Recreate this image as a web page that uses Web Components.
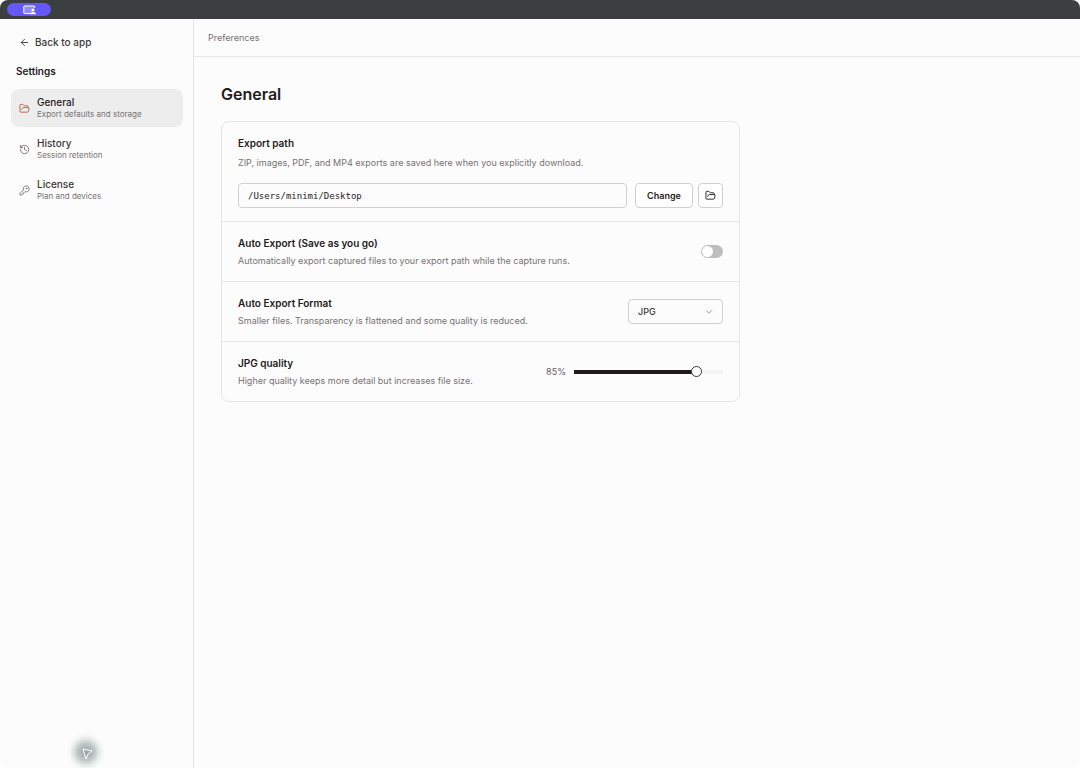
<!DOCTYPE html>
<html lang="en">
<head>
<meta charset="utf-8">
<title>Preferences</title>
<style>
html,body{height:100%}
body{margin:0;background:#fff;font-family:Inter,"Liberation Sans",sans-serif;font-size:10px;line-height:12px;color:#1f1b1d}
</style>
</head>
<body>
<settings-app></settings-app>
<script>
const icons = {
  folder: '<path d="m6 14 1.5-2.9A2 2 0 0 1 9.24 10H20a2 2 0 0 1 1.94 2.5l-1.54 6a2 2 0 0 1-1.95 1.5H4a2 2 0 0 1-2-2V5a2 2 0 0 1 2-2h3.9a2 2 0 0 1 1.69.9l.81 1.2a2 2 0 0 0 1.67.9H18a2 2 0 0 1 2 2v2"/>',
  history: '<path d="M3 12a9 9 0 1 0 9-9 9.75 9.75 0 0 0-6.74 2.74L3 8"/><path d="M3 3v5h5M12 7v5l4 2"/>',
  key: '<path d="M2.6 17.4A2 2 0 0 0 2 18.8V21a1 1 0 0 0 1 1h3a1 1 0 0 0 1-1v-1a1 1 0 0 1 1-1h1a1 1 0 0 0 1-1v-1a1 1 0 0 1 1-1h.2a2 2 0 0 0 1.4-.6l.8-.8a6.5 6.5 0 1 0-4-4z"/><circle cx="16.5" cy="7.5" r=".8" fill="currentColor"/>',
  back: '<path d="m12 19-7-7 7-7M19 12H5"/>',
  chevron: '<path d="m6 9 6 6 6-6"/>'
};

function define(name, html, setup) {
  const template = document.createElement('template');
  template.innerHTML = '<style>*{box-sizing:border-box}:host{display:block;box-sizing:border-box}</style>' + html;
  customElements.define(name, class extends HTMLElement {
    connectedCallback() {
      if (this.shadowRoot) return;
      this.attachShadow({ mode: 'open' }).append(template.content.cloneNode(true));
      if (setup) setup(this, this.shadowRoot);
    }
  });
}

define('ui-icon', `
<style>:host{flex:none;width:11px;height:11px}svg{display:block;width:100%;height:100%}</style>
<svg viewBox="0 0 24 24" fill="none" stroke="currentColor" stroke-width="2" stroke-linecap="round" stroke-linejoin="round" aria-hidden="true"></svg>`,
(host, root) => { root.querySelector('svg').innerHTML = icons[host.getAttribute('name')] || ''; });

define('title-bar', `
<style>
:host{flex:none;height:19px;padding:3px 7px;background:#3b3f3f;border-radius:8px 8px 0 0}
button{display:flex;align-items:center;justify-content:center;width:44px;height:13px;padding:0;border:0;border-radius:7px;background:#6657fb;color:#fff}
svg{width:13px;height:10px}
</style>
<button type="button" aria-label="Presenter view"><svg viewBox="0 0 13 10" aria-hidden="true">
<path d="M7 8.5H1.5a.7.7 0 0 1-.7-.7V1.7a.7.7 0 0 1 .7-.7H11a.7.7 0 0 1 .7.7V3" fill="#fff" fill-opacity=".3" stroke="#fff"/>
<circle cx="10" cy="5" r="1.6" fill="#fff"/><path d="M7 9.3c0-3 6-3 6 0z" fill="#fff"/></svg></button>`);

define('nav-item', `
<style>
a{display:flex;align-items:center;gap:7px;height:38px;padding:0 8px;border-radius:8px;color:#3c383a;text-decoration:none}
:host([active]) a{background:#ededed;color:#1f1b1d}
ui-icon{color:#777274}
:host([active]) ui-icon{color:#c4574b}
.name{display:block;font-weight:500;font-size:10px;line-height:12px}
small{display:block;font-size:8px;line-height:12px;color:#777274}
</style>
<a href="#"><i></i><span><span class="name"><slot></slot></span><small><slot name="note"></slot></small></span></a>`,
(host, root) => {
  const icon = document.createElement('ui-icon');
  icon.setAttribute('name', host.getAttribute('icon'));
  root.querySelector('i').replaceWith(icon);
  if (host.hasAttribute('active')) root.querySelector('a').setAttribute('aria-current', 'page');
});

define('side-bar', `
<style>
:host{display:flex;flex-direction:column;flex:none;width:194px;padding:16px 10px 16px 11px;border-right:1px solid #e7e6e6}
.back{display:flex;align-items:center;gap:5px;height:14px;padding-left:8px;color:#3c383a;text-decoration:none;font-weight:500}
h2{margin:16px 0 12px 5px;font-size:10px;line-height:12px;font-weight:600}
nav{display:flex;flex-direction:column;gap:3px}
</style>
<a class="back" href="#"><ui-icon name="back"></ui-icon>Back to app</a>
<h2>Settings</h2>
<nav aria-label="Settings">
<nav-item icon="folder" active>General<span slot="note">Export defaults and storage</span></nav-item>
<nav-item icon="history">History<span slot="note">Session retention</span></nav-item>
<nav-item icon="key">License<span slot="note">Plan and devices</span></nav-item>
</nav>`);

define('setting-row', `
<style>
:host{display:flex;align-items:center;justify-content:space-between;gap:16px;min-height:60px;padding:0 16px;border-top:1px solid #e7e6e6}
:host([stacked]){display:block;border-top:0;padding:14px 16px 13px}
h3{margin:0;font-size:10px;line-height:14px;font-weight:600}
p{margin:4px 0 0;font-size:9px;line-height:14px;color:#777274}
:host([stacked]) p{margin:6px 0 13px}
</style>
<div><h3><slot name="title"></slot></h3><p><slot name="note"></slot></p></div><slot></slot>`);

define('path-field', `
<style>
:host{display:flex}
input,button{height:25px;border:1px solid #d2d0d1;border-radius:4px;color:#1f1b1d}
input{flex:1;min-width:0;padding:0 9px;background:transparent;font:9px "DejaVu Sans Mono","Liberation Mono",monospace}
button{display:flex;align-items:center;justify-content:center;background:#fff;padding:0;font:600 9px Inter,sans-serif}
.change{width:58px;margin:0 5px 0 8px}.open{width:25px}
</style>
<input type="text" aria-label="Export path" value="/Users/minimi/Desktop" readonly>
<button type="button" class="change">Change</button>
<button type="button" class="open" aria-label="Open folder"><ui-icon name="folder"></ui-icon></button>`);

define('toggle-switch', `
<style>
input{display:flex;appearance:none;width:22px;height:13px;margin:0;padding:1px;border-radius:7px;background:#bfbdbe}
input::before{content:"";width:11px;height:11px;border-radius:50%;background:#fff}
input:checked{background:#1f1b1d;justify-content:end}
</style>
<input type="checkbox" role="switch" aria-label="Auto Export">`);

define('format-select', `
<style>
:host{display:grid;align-items:center;width:95px}
select,ui-icon{grid-area:1/1}
select{appearance:none;width:100%;height:25px;padding:0 9px;border:1px solid #d2d0d1;border-radius:4px;background:transparent;color:#3c383a;font:500 9px Inter,sans-serif}
ui-icon{justify-self:end;margin-right:9px;width:10px;height:10px;color:#8b8788;pointer-events:none}
</style>
<select aria-label="Auto Export Format"><option>JPG</option><option>PNG</option></select><ui-icon name="chevron"></ui-icon>`);

define('quality-slider', `
<style>
:host{display:flex;align-items:center;gap:8px;font-size:9px;color:#615d5f}
input{--fill:85%;appearance:none;width:149px;height:12px;margin:0;background:linear-gradient(to right,#1f1b1d var(--fill),#f4f3f3 var(--fill)) center/100% 4px no-repeat;border-radius:2px}
input::-webkit-slider-thumb{appearance:none;width:11px;height:11px;border:1px solid #3c383a;border-radius:50%;background:#fff}
</style>
<output for="quality">85%</output><input id="quality" type="range" min="0" max="100" value="85" aria-label="JPG quality">`,
(host, root) => {
  const input = root.querySelector('input');
  input.addEventListener('input', () => {
    input.style.setProperty('--fill', input.value + '%');
    root.querySelector('output').textContent = input.value + '%';
  });
});

define('settings-panel', `
<style>
:host{flex:1;min-width:0}
header{height:38px;padding:13px 14px 12px;border-bottom:1px solid #e7e6e6;color:#777274;font-size:9px}
main{max-width:573px;padding:27px}
h1{margin:0 0 17px;font-size:16px;line-height:20px;font-weight:600}
.card{border:1px solid #e7e6e6;border-radius:8px}
</style>
<header>Preferences</header>
<main>
<h1>General</h1>
<div class="card">
<setting-row stacked><span slot="title">Export path</span><span slot="note">ZIP, images, PDF, and MP4 exports are saved here when you explicitly download.</span><path-field></path-field></setting-row>
<setting-row><span slot="title">Auto Export (Save as you go)</span><span slot="note">Automatically export captured files to your export path while the capture runs.</span><toggle-switch></toggle-switch></setting-row>
<setting-row><span slot="title">Auto Export Format</span><span slot="note">Smaller files. Transparency is flattened and some quality is reduced.</span><format-select></format-select></setting-row>
<setting-row><span slot="title">JPG quality</span><span slot="note">Higher quality keeps more detail but increases file size.</span><quality-slider></quality-slider></setting-row>
</div>
</main>`);

define('pointer-glow', `
<style>
:host{position:fixed;left:66px;bottom:-4px;width:40px;height:40px;pointer-events:none;background:radial-gradient(circle closest-side,#a1adab 0,#acb7b5 25%,#c3cbc9 45%,#e3e7e6 65%,#f5f7f6 82%,#fcfcfc00 100%)}
svg{display:block;width:100%;height:100%}
</style>
<svg viewBox="0 0 40 40" fill="#9ba7a5" stroke="#fff" stroke-linejoin="round" aria-hidden="true"><path d="m17 17 9 2-4 3-2 5z"/></svg>`);

define('settings-app', `
<style>
:host{display:flex;flex-direction:column;min-height:100vh}
.body{display:flex;flex:1;background:#fcfcfc;border-radius:0 0 8px 8px}
</style>
<title-bar></title-bar>
<div class="body"><side-bar></side-bar><settings-panel></settings-panel></div>
<pointer-glow></pointer-glow>`);
</script>
</body>
</html>
